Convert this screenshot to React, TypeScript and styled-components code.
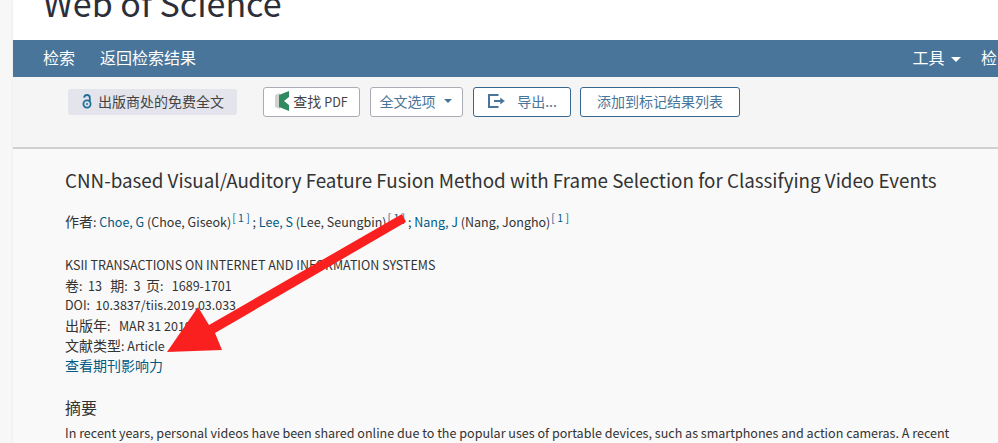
import styled, { createGlobalStyle } from 'styled-components';

const GlobalStyle = createGlobalStyle`
  html, body {
    margin: 0;
    height: 443px;
    overflow: hidden;
    background: #f7f7f7;
    font-family: "Noto Sans CJK SC", "Source Sans Pro", "Noto Sans", sans-serif;
    color: #333;
  }
`;

export default function App() {
  return (
    <>
      <GlobalStyle />
      <Page>
        <Header>
          <BrandTitle>Web of Science</BrandTitle>
        </Header>
        <NavBar>
          <NavGroup>
            <NavLink>检索</NavLink>
            <NavLink>返回检索结果</NavLink>
          </NavGroup>
          <ToolsGroup>
            <NavLink>
              工具 <NavCaret />
            </NavLink>
            <NavLink>检</NavLink>
          </ToolsGroup>
        </NavBar>
        <Toolbar>
          <FreeTextBadge>
            <svg width="10" height="15" viewBox="0 0 10 15" fill="none" stroke="#1f6f99" strokeWidth="1.8">
              <circle cx="5" cy="10" r="3.6" />
              <circle cx="5" cy="10" r="0.8" fill="#1f6f99" strokeWidth="0.6" />
              <path d="M2.2 3.8a2.8 2.8 0 0 1 5.6 0V7.5" />
            </svg>
            出版商处的免费全文
          </FreeTextBadge>
          <PdfButton>
            <svg width="15" height="21" viewBox="0 0 15 21">
              <path d="M0 4 L5 2 L5 18 L0 16Z" fill="#cfd2cf" />
              <path d="M14 0 L14 6 L9 10 L14 14 L14 20 L4 16 L4 4Z" fill="#2f8a5f" />
            </svg>
            <span>
              查找 <Latin>PDF</Latin>
            </span>
          </PdfButton>
          <OptionsButton>
            全文选项 <ButtonCaret />
          </OptionsButton>
          <OutlineButton $width={98}>
            <svg width="20" height="16" viewBox="0 0 20 16" fill="none" stroke="#487599" strokeWidth="2">
              <path d="M11.5 2H2v12h9.5" />
              <path d="M7 8h8" />
              <path d="M13.5 5 17.5 8 13.5 11V5Z" fill="#487599" strokeWidth="0.5" />
            </svg>
            <ExportLabel>导出...</ExportLabel>
          </OutlineButton>
          <OutlineButton $width={160}>添加到标记结果列表</OutlineButton>
        </Toolbar>
        <Record>
          <RecordTitle>
            CNN-based Visual/Auditory Feature Fusion Method with Frame Selection for Classifying Video Events
          </RecordTitle>
          <Authors>
            <Cjk>作者</Cjk>: <AuthorLink>Choe, G</AuthorLink> (Choe, Giseok)<Ref>[ 1 ]</Ref> ;{' '}
            <AuthorLink>Lee, S</AuthorLink> (Lee, Seungbin)<Ref>[ 1 ]</Ref> ; <AuthorLink>Nang, J</AuthorLink> (Nang,
            Jongho)<Ref>[ 1 ]</Ref>
          </Authors>
          <Source>
            <SourceLine>KSII TRANSACTIONS ON INTERNET AND INFORMATION SYSTEMS</SourceLine>
            <SourceLine>
              <Cjk>卷</Cjk>:&nbsp; 13 &nbsp;&nbsp;<Cjk>期</Cjk>:&nbsp; 3 &nbsp;<Cjk>页</Cjk>:&nbsp;&nbsp; 1689-1701
            </SourceLine>
            <SourceLine>DOI:&nbsp;&nbsp;10.3837/tiis.2019.03.033</SourceLine>
            <SourceLine>
              <Cjk>出版年</Cjk>:&nbsp;&nbsp; MAR 31 2019
            </SourceLine>
            <SourceLine>
              <Cjk>文献类型</Cjk>: Article
            </SourceLine>
            <SourceLine>
              <AuthorLink>
                <Cjk>查看期刊影响力</Cjk>
              </AuthorLink>
            </SourceLine>
          </Source>
          <SectionTitle>摘要</SectionTitle>
          <Abstract>
            In recent years, personal videos have been shared online due to the popular uses of portable devices, such
            as smartphones and action cameras. A recent
          </Abstract>
        </Record>
      </Page>
      <ArrowOverlay width="998" height="443" viewBox="0 0 998 443">
        <path d="M402 214 L406 222 L215 333 L222 350 L167 352 L198 307 L209 325Z" fill="#fb2020" />
      </ArrowOverlay>
    </>
  );
}

const Page = styled.div`
  margin-left: 13px;
  background: #f9f9f9;
  height: 443px;
  overflow: hidden;
  box-shadow: -1px 0 2px rgba(0, 0, 0, 0.04);
`;

const Header = styled.header`
  height: 40px;
  background: #fff;
  overflow: hidden;
`;

const BrandTitle = styled.h1`
  margin: -22px 0 0 30px;
  font-size: 34px;
  line-height: 50px;
  font-weight: 400;
  color: #2c2f3a;
`;

const NavBar = styled.nav`
  height: 37px;
  background: #487599;
  display: flex;
  align-items: center;
  justify-content: space-between;
  padding: 0 1px 3px 30px;
  box-sizing: border-box;
`;

const NavGroup = styled.div`
  display: flex;
  align-items: center;
  column-gap: 25px;
`;

const ToolsGroup = styled(NavGroup)`
  column-gap: 20px;
`;

const NavLink = styled.a`
  color: #fff;
  font-size: 16px;
  white-space: nowrap;
`;

const NavCaret = styled.span`
  display: inline-block;
  margin-left: 3px;
  vertical-align: middle;
  border-left: 5px solid transparent;
  border-right: 5px solid transparent;
  border-top: 5px solid #fff;
`;

const Toolbar = styled.div`
  height: 72px;
  box-sizing: border-box;
  background: #f5f5f5;
  border-bottom: 2px solid #d0d0d0;
  padding: 10px 0 0 55px;
  display: flex;
  align-items: flex-start;
`;

const FreeTextBadge = styled.div`
  display: flex;
  align-items: center;
  column-gap: 6px;
  box-sizing: border-box;
  width: 169px;
  height: 26px;
  margin: 2px 26px 0 0;
  padding: 0 0 2px 14px;
  background: #e3e4ec;
  border-radius: 3px;
  font-size: 14px;
  color: #444;
`;

const BaseButton = styled.button`
  box-sizing: border-box;
  height: 30px;
  display: flex;
  align-items: center;
  justify-content: center;
  background: #fff;
  border-radius: 3px;
  font-family: inherit;
  font-size: 14px;
  padding: 0 0 2px;
`;

const PdfButton = styled(BaseButton)`
  width: 97px;
  margin-right: 10px;
  border: 1px solid #a9adb3;
  color: #444;
  column-gap: 3px;
`;

const OptionsButton = styled(BaseButton)`
  width: 93px;
  margin-right: 10px;
  border: 1px solid #a9adb3;
  color: #487599;
  padding-right: 2px;
`;

const ButtonCaret = styled.span`
  display: inline-block;
  margin-left: 8px;
  border-left: 4.5px solid transparent;
  border-right: 4.5px solid transparent;
  border-top: 4.5px solid #487599;
`;

const OutlineButton = styled(BaseButton)<{ $width: number }>`
  width: ${(p) => p.$width}px;
  margin-right: 9px;
  border: 1px solid #37668f;
  color: #487599;
`;

const ExportLabel = styled.span`
  margin-left: 10px;
`;

const Latin = styled.span`
  font-size: 12.5px;
`;

const Cjk = styled.span`
  font-size: 14px;
`;

const Record = styled.main`
  padding: 17px 0 0 52px;
`;

const RecordTitle = styled.h2`
  margin: 0;
  font-size: 18.8px;
  line-height: 28px;
  font-weight: 400;
  color: #333;
  white-space: nowrap;
`;

const Authors = styled.p`
  margin: 16px 0 0;
  font-size: 12.5px;
  line-height: 22px;
  white-space: nowrap;
`;

const AuthorLink = styled.a`
  color: #005a84;
`;

const Ref = styled.sup`
  color: #005a84;
  font-size: 10.5px;
  line-height: 0;
  margin-left: 1px;
`;

const Source = styled.div`
  margin-top: 22px;
  font-size: 12.5px;
`;

const SourceLine = styled.div`
  height: 20px;
  line-height: 20px;
  white-space: nowrap;
`;

const SectionTitle = styled.h3`
  margin: 20px 0 0;
  font-size: 16px;
  line-height: 24px;
  font-weight: 400;
`;

const Abstract = styled.p`
  margin: 3px 0 0;
  font-size: 12.55px;
  line-height: 22px;
  white-space: nowrap;
`;

const ArrowOverlay = styled.svg`
  position: absolute;
  left: 0;
  top: 0;
  pointer-events: none;
`;
